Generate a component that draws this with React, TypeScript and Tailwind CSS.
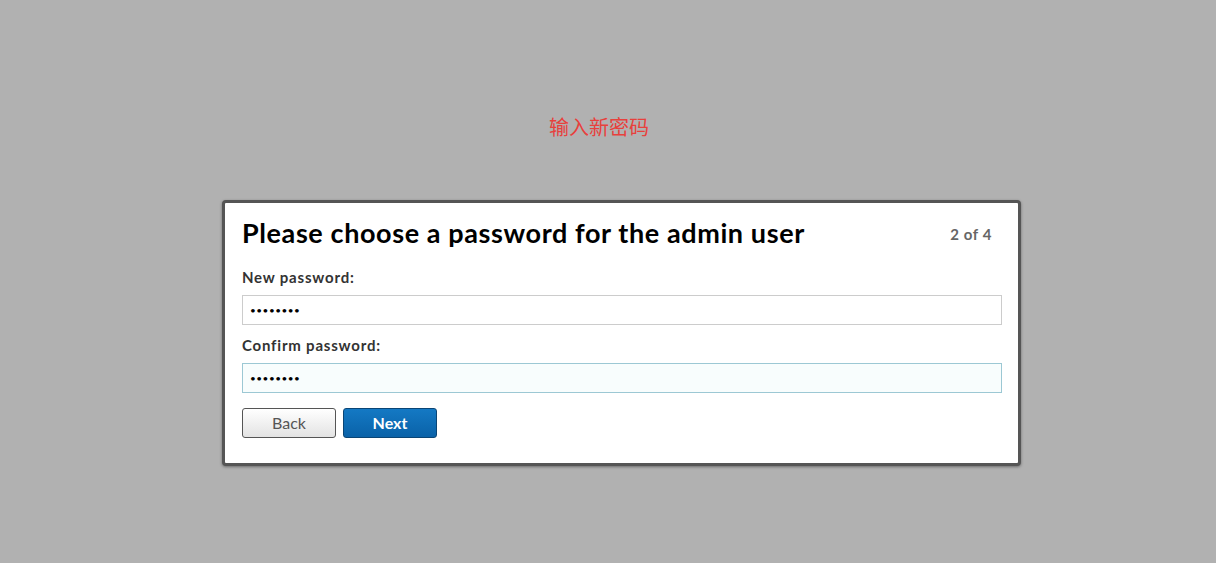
import React from 'react';

const App: React.FC = () => {
  return (
    <div className="min-h-[563px] w-full bg-[#b1b1b1] pt-[115px]" style={{ fontFamily: 'Lato, "Noto Sans CJK SC", sans-serif' }}>
      <p className="pr-[18px] text-center text-[20px] leading-[24px] text-[#e8403c]" style={{ fontFamily: '"Noto Sans CJK SC", sans-serif' }}>
        输入新密码
      </p>

      <div className="ml-[222px] mt-[61px] w-[799px] rounded-[4px] border-[3px] border-[#555] bg-white pb-[25px] pl-[17px] pr-[16px] pt-[14px] shadow-[0_1px_3px_rgba(0,0,0,0.4)]">
        <div className="flex items-start justify-between">
          <h1 className="text-[27px] font-bold leading-[32px] tracking-[0.6px] text-black">Please choose a password for the admin user</h1>
          <span className="mr-[10px] mt-[6px] text-[15px] font-bold tracking-[0.6px] text-[#666]">2 of 4</span>
        </div>

        <form className="mt-[19px]">
          <label className="block text-[15px] font-bold leading-[18px] tracking-[0.8px] text-[#333]">New password:</label>
          <input
            type="password"
            defaultValue="admin123"
            className="mt-[9px] block h-[30px] w-full border border-[#ccc] bg-white px-[7px] text-[10px] tracking-[0.5px] text-black outline-none"
          />

          <label className="mt-[11px] block text-[15px] font-bold leading-[18px] tracking-[0.8px] text-[#333]">Confirm password:</label>
          <input
            type="password"
            defaultValue="admin123"
            autoFocus
            className="mt-[9px] block h-[30px] w-full border border-[#9cc8d4] bg-[#f8fdfd] px-[7px] text-[10px] tracking-[0.5px] text-black caret-black outline-none"
          />

          <div className="mt-[15px] flex gap-[7px]">
            <button
              type="button"
              className="h-[30px] w-[94px] rounded-[3px] border border-[#555] bg-gradient-to-b from-white to-[#e3e3e3] text-[16px] text-[#555]"
            >
              Back
            </button>
            <button
              type="button"
              className="h-[30px] w-[94px] rounded-[3px] border border-[#0a4575] bg-gradient-to-b from-[#1479c4] to-[#0a62a8] text-[16px] font-bold text-white"
            >
              Next
            </button>
          </div>
        </form>
      </div>
    </div>
  );
};

export default App;
